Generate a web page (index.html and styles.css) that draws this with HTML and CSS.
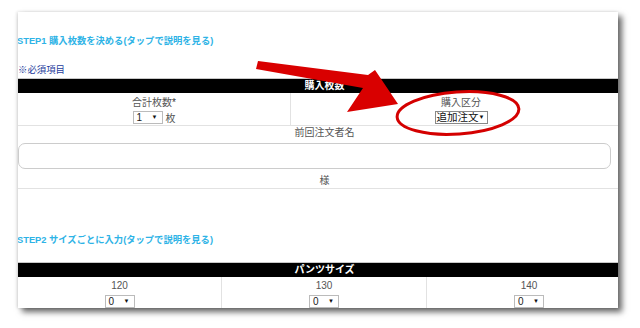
FILE: index.html
```html
<!DOCTYPE html>
<html lang="ja">
<head>
    <meta charset="UTF-8">
    <meta name="viewport" content="width=device-width, initial-scale=1.0">
    <title>購入枚数</title>
    <link rel="stylesheet" href="styles.css">
</head>
<body>
    <div class="paper">
        <div class="page">
            <p class="step">STEP1 購入枚数を決める(タップで説明を見る)</p>
            <p class="required">※必須項目</p>

            <div class="bar">購入枚数</div>
            <div class="row">
                <div class="cell cell-total">
                    <div class="label">合計枚数<span class="mark">*</span></div>
                    <div class="field">
                        <span class="select select-num">1<span class="caret">▼</span></span>
                        <span>枚</span>
                    </div>
                </div>
                <div class="cell cell-type">
                    <div class="label">購入区分</div>
                    <div class="field">
                        <span class="select select-type">追加注文<span class="caret">▼</span></span>
                    </div>
                </div>
            </div>

            <div class="name-block">
                <div class="label">前回注文者名</div>
                <div class="text-input"></div>
                <div class="label suffix">様</div>
            </div>

            <p class="step step2">STEP2 サイズごとに入力(タップで説明を見る)</p>

            <div class="bar bar2">パンツサイズ</div>
            <div class="row sizes">
                <div class="cell size-a">
                    <div class="label">120</div>
                    <div class="field"><span class="select select-num">0<span class="caret">▼</span></span></div>
                </div>
                <div class="cell size-b">
                    <div class="label">130</div>
                    <div class="field"><span class="select select-num">0<span class="caret">▼</span></span></div>
                </div>
                <div class="cell size-c">
                    <div class="label">140</div>
                    <div class="field"><span class="select select-num">0<span class="caret">▼</span></span></div>
                </div>
            </div>
        </div>
    </div>

    <svg class="markup" width="640" height="328" viewBox="0 0 640 328">
        <polygon class="arrow" points="258,61 368,75 375,70 398,104 347,112 363,88 256,69"/>
        <ellipse class="ring" cx="458" cy="113" rx="61" ry="21" transform="rotate(-4 458 113)"/>
    </svg>
</body>
</html>
```

FILE: styles.css
```css
body {
    margin: 0;
    height: 328px;
    overflow: hidden;
    position: relative;
    background: #ffffff;
    font-family: "Liberation Sans", "Noto Sans CJK JP", sans-serif;
    font-size: 10px;
    color: #555;
}

.paper {
    margin: 12px 0 0 18px;
    width: 600px;
    height: 296px;
    overflow: hidden;
    background: #ffffff;
    box-shadow: 4px 4px 6px rgba(0, 0, 0, 0.6), -1px 0 3px rgba(0, 0, 0, 0.15);
}

.page {
    width: 613px;
    padding-top: 22px;
}

.step {
    margin: 0 0 0 -1px;
    line-height: 14px;
    color: #2eb3e6;
    font-size: 9.3px;
    font-weight: bold;
    white-space: nowrap;
}

.step2 {
    margin-top: 44px;
}

.required {
    margin: 15px 0 0;
    line-height: 14px;
    color: #1d3a9c;
    font-size: 9.4px;
}

.bar {
    margin-top: 1px;
    border-top: 1px solid #c8c8c8;
    height: 14px;
    line-height: 14px;
    background: #000;
    color: #fff;
    font-weight: bold;
    text-align: center;
}

.bar2 {
    margin-top: 15px;
}

.row {
    display: flex;
    border-bottom: 1px solid #e2e2e2;
}

.cell {
    text-align: center;
    padding: 3px 0 1px;
}

.cell-total {
    width: 272px;
    border-right: 1px solid #e2e2e2;
}

.cell-type {
    flex: 1;
}

.label {
    line-height: 14px;
}

.mark {
    color: #333;
}

.field {
    margin-top: 1px;
    height: 13px;
    display: flex;
    justify-content: center;
    align-items: center;
    gap: 3px;
}

.select {
    display: inline-flex;
    align-items: center;
    justify-content: space-between;
    box-sizing: border-box;
    height: 13px;
    padding: 0 4px 0 3px;
    border: 1px solid #bbb;
    background: #fff;
    color: #222;
    line-height: 11px;
    white-space: nowrap;
}

.select-num {
    width: 30px;
}

.select-type {
    width: 53px;
    padding: 0 2px 0 1px;
    border-color: #888;
    color: #111;
    font-size: 10.5px;
}

.caret {
    font-size: 6px;
    color: #111;
}

.name-block {
    border-bottom: 1px solid #e2e2e2;
    text-align: center;
}

.text-input {
    margin-top: 3px;
    width: 593px;
    height: 26px;
    box-sizing: border-box;
    border: 1px solid #ccc;
    border-radius: 7px;
    background: #fff;
}

.suffix {
    margin-top: 4px;
    line-height: 15px;
}

.sizes {
    border-bottom: none;
}

.sizes .cell {
    padding: 2px 0 0;
}

.sizes .field {
    margin-top: 2px;
}

.size-a {
    width: 203px;
    border-right: 1px solid #e2e2e2;
}

.size-b {
    width: 204px;
    border-right: 1px solid #e2e2e2;
}

.size-c {
    flex: 1;
}

.markup {
    position: absolute;
    top: 0;
    left: 0;
    pointer-events: none;
}

.arrow {
    fill: #d90000;
}

.ring {
    fill: none;
    stroke: #d40000;
    stroke-width: 3;
}
```
